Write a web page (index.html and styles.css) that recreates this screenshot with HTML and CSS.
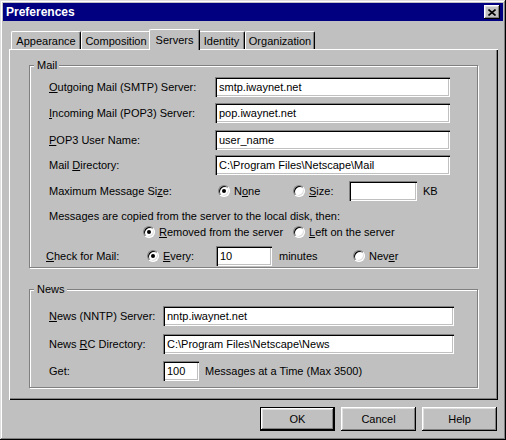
FILE: index.html
```html
<!DOCTYPE html>
<html>
<head>
<meta charset="utf-8">
<title>Preferences</title>
<link rel="stylesheet" href="styles.css">
</head>
<body>
<div class="window">
  <div class="titlebar">
    <span class="title">Preferences</span>
    <span class="close"><svg width="8" height="7" viewBox="0 0 8 7"><path d="M0.5 0.5 L7.5 6.5 M7.5 0.5 L0.5 6.5" stroke="#000" stroke-width="1.6" fill="none"/></svg></span>
  </div>
  <div class="tabs">
    <div class="tab w70">Appearance</div>
    <div class="tab w70">Composition</div>
    <div class="tab active">Servers</div>
    <div class="tab w47">Identity</div>
    <div class="tab w70">Organization</div>
  </div>
  <div class="panel">
    <fieldset class="group mail">
      <legend>Mail</legend>
      <div class="row m1"><span class="lbl"><u>O</u>utgoing Mail (SMTP) Server:</span><span class="field wide">smtp.iwaynet.net</span></div>
      <div class="row m2"><span class="lbl"><u>I</u>ncoming Mail (POP3) Server:</span><span class="field wide">pop.iwaynet.net</span></div>
      <div class="row m3"><span class="lbl"><u>P</u>OP3 User Name:</span><span class="field wide">user_name</span></div>
      <div class="row m4"><span class="lbl">Mail <u>D</u>irectory:</span><span class="field wide">C:\Program Files\Netscape\Mail</span></div>
      <div class="row m5">
        <span class="lbl">Maximum Message Si<u>z</u>e:</span>
        <span class="opt opt-none"><span class="radio checked"></span><span>N<u>o</u>ne</span></span>
        <span class="opt opt-size"><span class="radio"></span><span><u>S</u>ize:</span></span>
        <span class="field size"></span>
        <span class="unit">KB</span>
      </div>
      <div class="row m6 text">Messages are copied from the server to the local disk, then:</div>
      <div class="row m7">
        <span class="opt opt-removed"><span class="radio checked"></span><span><u>R</u>emoved from the server</span></span>
        <span class="opt"><span class="radio"></span><span><u>L</u>eft on the server</span></span>
      </div>
      <div class="row m8">
        <span class="lbl lbl-check"><u>C</u>heck for Mail:</span>
        <span class="opt opt-every"><span class="radio checked"></span><span><u>E</u>very:</span></span>
        <span class="field every">10</span>
        <span class="minutes">minutes</span>
        <span class="opt"><span class="radio"></span><span>Nev<u>e</u>r</span></span>
      </div>
    </fieldset>
    <fieldset class="group news">
      <legend>News</legend>
      <div class="row n1"><span class="lbl lbl-news"><u>N</u>ews (NNTP) Server:</span><span class="field news-wide">nntp.iwaynet.net</span></div>
      <div class="row n2"><span class="lbl lbl-news">News <u>R</u>C Directory:</span><span class="field news-wide">C:\Program Files\Netscape\News</span></div>
      <div class="row n3"><span class="lbl lbl-news">Get:</span><span class="field get">100</span><span class="unit">Messages at a Time (Max 3500)</span></div>
    </fieldset>
  </div>
  <div class="buttons">
    <div class="btn default"><span class="btn-face">OK</span></div>
    <div class="btn"><span class="btn-face">Cancel</span></div>
    <div class="btn"><span class="btn-face">Help</span></div>
  </div>
</div>
</body>
</html>
```

FILE: styles.css
```css
html, body {
  margin: 0;
  padding: 0;
  background: #c0c0c0;
}
body {
  font-family: "Liberation Sans", Arial, sans-serif;
  font-size: 11px;
  line-height: 13px;
  color: #000;
}
u { text-decoration: underline; text-underline-offset: 1px; }

.window {
  width: 506px;
  height: 440px;
  box-sizing: border-box;
  padding: 3px;
  background: #c0c0c0;
  box-shadow: inset -1px -1px 0 #000, inset 1px 1px 0 #dfdfdf,
              inset -2px -2px 0 #808080, inset 2px 2px 0 #fff;
}

.titlebar {
  height: 18px;
  display: flex;
  align-items: center;
  background: #000080;
  color: #fff;
  padding-left: 3px;
}
.title {
  font-weight: bold;
  font-size: 12px;
}
.close {
  margin-left: auto;
  margin-right: 3px;
  width: 16px;
  height: 14px;
  box-sizing: border-box;
  display: flex;
  align-items: center;
  justify-content: center;
  background: #c0c0c0;
  box-shadow: inset -1px -1px 0 #000, inset 1px 1px 0 #fff,
              inset -2px -2px 0 #808080, inset 2px 2px 0 #dfdfdf;
}
.close svg { display: block; }

/* tabs */
.tabs {
  display: flex;
  align-items: flex-end;
  margin-top: 8px;
  padding-left: 8px;
}
.tab {
  height: 18px;
  box-sizing: border-box;
  display: flex;
  align-items: center;
  justify-content: center;
  padding-top: 2px;
  background: #c0c0c0;
  border-top: 1px solid #fff;
  border-left: 1px solid #fff;
  border-right: 1px solid #000;
  border-radius: 2px 2px 0 0;
  box-shadow: inset -1px 0 0 #808080;
}
.w70 { width: 70px; }
.w47 { width: 47px; }
.tab.active {
  width: 51px;
  height: 21px;
  margin: 0 -2px -1px;
  padding-top: 0;
  position: relative;
  z-index: 1;
}

/* panel */
.panel {
  margin-left: 6px;
  width: 489px;
  height: 351px;
  box-sizing: border-box;
  padding: 10px 0 0 20px;
  box-shadow: inset 1px 1px 0 #fff, inset -1px -1px 0 #000,
              inset -2px -2px 0 #808080;
}

.group {
  width: 449px;
  box-sizing: border-box;
  margin: 0;
  padding: 0;
  border: 1px solid #808080;
  box-shadow: inset 1px 1px 0 #fff, 1px 1px 0 #fff;
}
.group legend {
  margin-left: 4px;
  padding: 0 2px 0 3px;
  line-height: 13px;
  background: #c0c0c0;
}
.mail { padding-bottom: 1px; }
.news { margin-top: 15px; padding-bottom: 6px; }

.row {
  display: flex;
  align-items: center;
  height: 20px;
  padding-left: 19px;
  white-space: nowrap;
}
.row.text { height: 13px; }
.m1 { margin-top: 5px; }
.m2 { margin-top: 6px; }
.m3 { margin-top: 7px; }
.m4 { margin-top: 5px; }
.m5 { margin-top: 6px; }
.m6 { margin-top: 9px; }
.m7 { margin-top: 2px; height: 14px; }
.m8 { margin-top: 7px; }
.n1 { margin-top: 10px; }
.n2 { margin-top: 8px; }
.n3 { margin-top: 7px; }

.lbl { width: 166px; flex: none; }
.lbl-check { width: 101px; margin-left: -3px; }
.lbl-news { width: 114px; }

.field {
  height: 20px;
  box-sizing: border-box;
  padding: 0 3px 0 4px;
  display: flex;
  align-items: center;
  background: #fff;
  flex: none;
  box-shadow: inset 1px 1px 0 #808080, inset 2px 2px 0 #000,
              inset -1px -1px 0 #fff, inset -2px -2px 0 #c0c0c0;
}
.field.wide { width: 235px; }
.field.size { width: 68px; }
.field.every { width: 56px; }
.field.news-wide { width: 291px; }
.field.get { width: 36px; }

.unit { margin-left: 6px; }
.minutes { margin-left: 7px; width: 74px; flex: none; }

.opt {
  display: flex;
  align-items: center;
  gap: 4px;
  flex: none;
}
.opt-none { margin-left: 3px; width: 75px; }
.opt-size { width: 56px; }
.opt-removed { margin-left: 94px; width: 150px; }
.opt-every { width: 69px; }

.radio {
  width: 12px;
  height: 12px;
  box-sizing: border-box;
  border-radius: 50%;
  background: #fff;
  border: 1px solid;
  border-color: #808080 #fff #fff #808080;
  box-shadow: inset 1px 1px 0 #000, inset -1px -1px 0 #dfdfdf;
  display: flex;
  align-items: center;
  justify-content: center;
  flex: none;
}
.radio.checked::after {
  content: "";
  width: 4px;
  height: 4px;
  border-radius: 50%;
  background: #000;
}

/* buttons */
.buttons {
  display: flex;
  justify-content: flex-end;
  gap: 6px;
  margin-top: 7px;
  margin-left: 6px;
  width: 488px;
}
.btn {
  width: 75px;
  height: 24px;
  box-sizing: border-box;
  display: flex;
  background: #c0c0c0;
}
.btn-face {
  flex: 1;
  display: flex;
  align-items: center;
  justify-content: center;
  box-shadow: inset -1px -1px 0 #000, inset 1px 1px 0 #fff,
              inset -2px -2px 0 #808080, inset 2px 2px 0 #dfdfdf;
}
.btn.default {
  border: 1px solid #000;
}
```
